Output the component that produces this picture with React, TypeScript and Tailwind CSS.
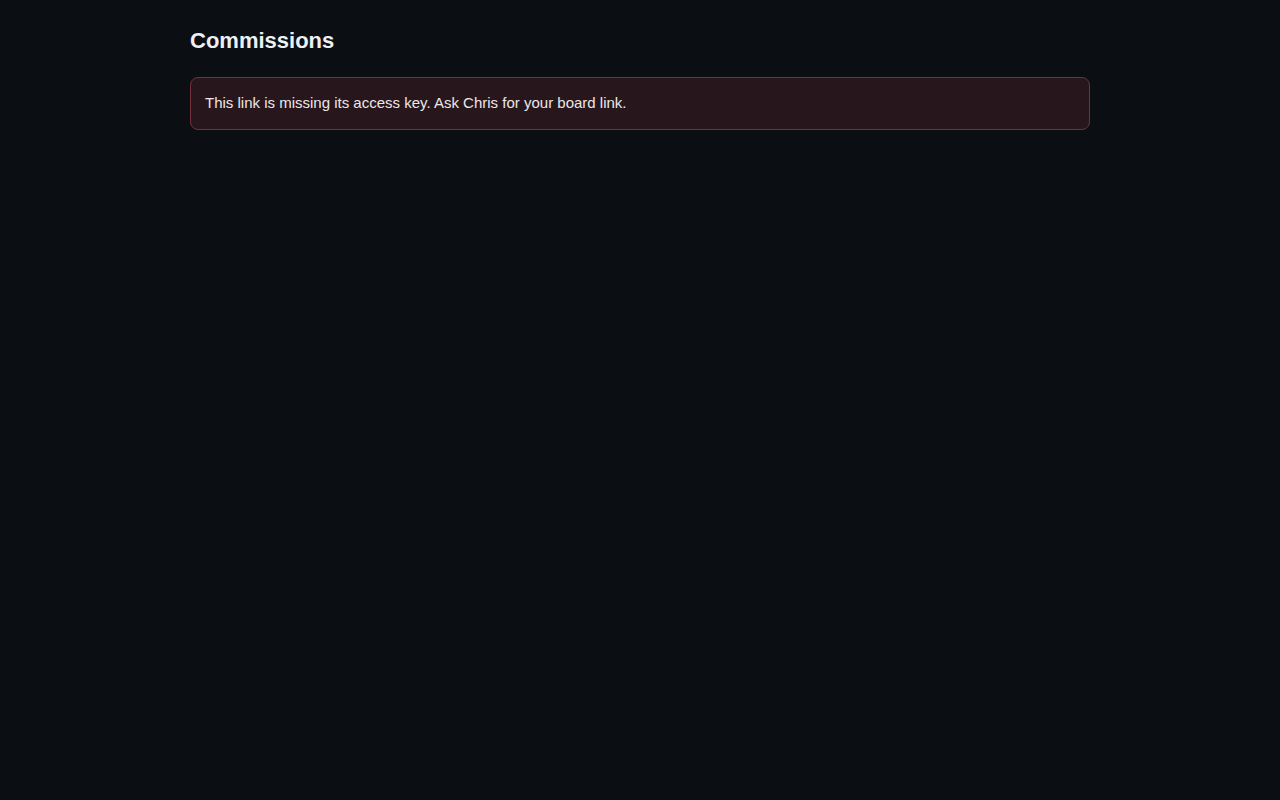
export default function App() {
  return (
    <div className="min-h-screen bg-[#0b0e13] text-[#e6e8eb]" style={{ fontFamily: '"Liberation Sans", Arial, sans-serif' }}>
      <div className="mx-auto w-[900px] pt-[28px]">
        <h1 className="text-[22px] font-bold leading-[25px] text-[#eef0f3]">Commissions</h1>
        <div className="mt-[24px] rounded-[8px] border border-[#74303a] bg-[#27171c] px-[14px] pt-[13px] pb-[15px] text-[15px] leading-[23px] text-[#ede6e8]">
          This link is missing its access key. Ask Chris for your board link.
        </div>
      </div>
    </div>
  );
}
